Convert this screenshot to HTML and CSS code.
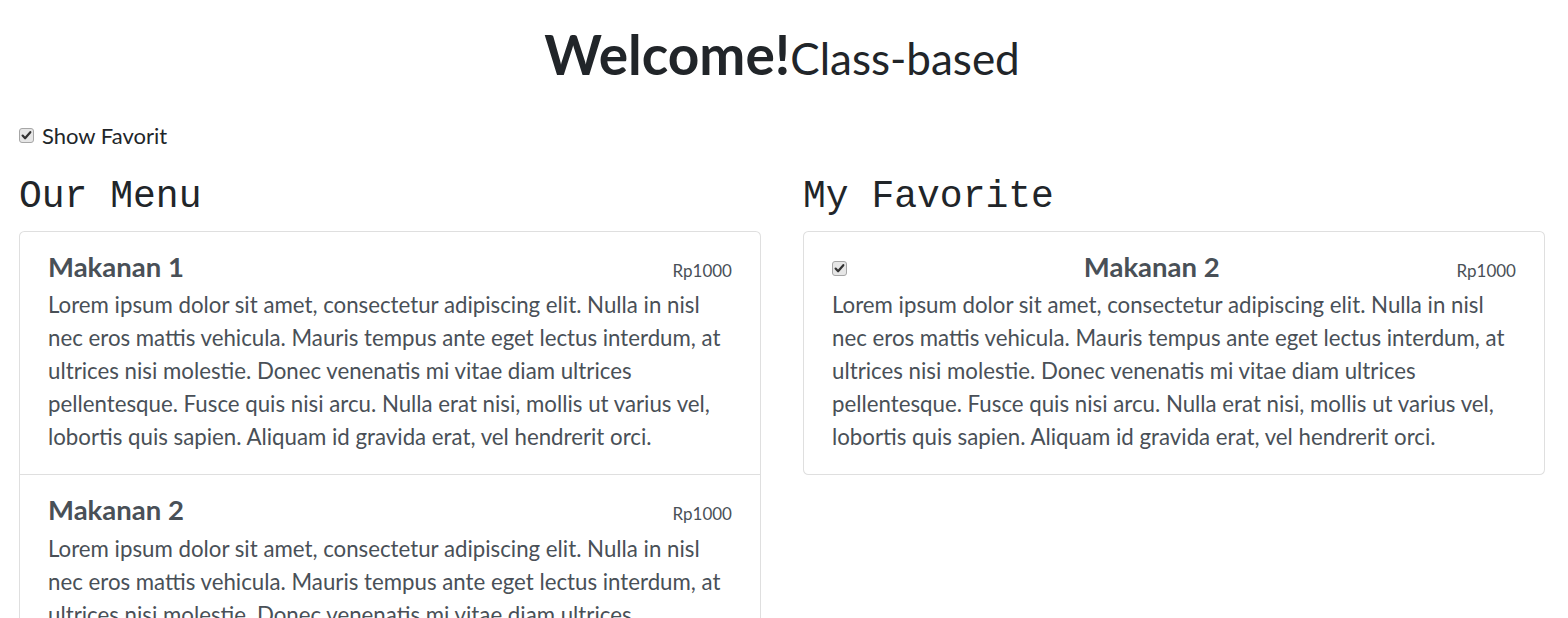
FILE: index.html
```html
<!DOCTYPE html>
<html>
<head>
<meta charset="utf-8">
<title>Welcome! Class-based</title>
<link rel="stylesheet" href="styles.css">
</head>
<body>
<div class="page">
  <h1 class="title">Welcome!<span class="subtitle">Class-based</span></h1>

  <label class="toggle">
    <input type="checkbox" class="check" checked>
    <span>Show Favorit</span>
  </label>

  <div class="columns">
    <section class="column">
      <h2 class="section-title">Our Menu</h2>
      <ul class="card">
        <li class="item">
          <div class="item-head">
            <h5 class="item-name">Makanan 1</h5>
            <span class="price">Rp1000</span>
          </div>
          <p class="item-desc">Lorem ipsum dolor sit amet, consectetur adipiscing elit. Nulla in nisl nec eros mattis vehicula. Mauris tempus ante eget lectus interdum, at ultrices nisi molestie. Donec venenatis mi vitae diam ultrices pellentesque. Fusce quis nisi arcu. Nulla erat nisi, mollis ut varius vel, lobortis quis sapien. Aliquam id gravida erat, vel hendrerit orci.</p>
        </li>
        <li class="item">
          <div class="item-head">
            <h5 class="item-name">Makanan 2</h5>
            <span class="price">Rp1000</span>
          </div>
          <p class="item-desc">Lorem ipsum dolor sit amet, consectetur adipiscing elit. Nulla in nisl nec eros mattis vehicula. Mauris tempus ante eget lectus interdum, at ultrices nisi molestie. Donec venenatis mi vitae diam ultrices pellentesque. Fusce quis nisi arcu. Nulla erat nisi, mollis ut varius vel, lobortis quis sapien. Aliquam id gravida erat, vel hendrerit orci.</p>
        </li>
      </ul>
    </section>

    <section class="column">
      <h2 class="section-title">My Favorite</h2>
      <ul class="card">
        <li class="item">
          <div class="item-head fav-head">
            <input type="checkbox" class="check fav-check" checked>
            <h5 class="item-name">Makanan 2</h5>
            <span class="price">Rp1000</span>
          </div>
          <p class="item-desc">Lorem ipsum dolor sit amet, consectetur adipiscing elit. Nulla in nisl nec eros mattis vehicula. Mauris tempus ante eget lectus interdum, at ultrices nisi molestie. Donec venenatis mi vitae diam ultrices pellentesque. Fusce quis nisi arcu. Nulla erat nisi, mollis ut varius vel, lobortis quis sapien. Aliquam id gravida erat, vel hendrerit orci.</p>
        </li>
      </ul>
    </section>
  </div>
</div>
</body>
</html>
```
FILE: styles.css
```css
* { box-sizing: border-box; }

html, body {
  margin: 0;
  background: #ffffff;
}

body {
  font-family: "Lato", "Liberation Sans", sans-serif;
  color: #212529;
}

.page {
  padding: 21px 23px 40px 19px;
}

.title {
  margin: 0;
  text-align: center;
  font-size: 55px;
  font-weight: 700;
  line-height: 66px;
  color: #212529;
}

.subtitle {
  font-size: 44px;
  font-weight: 400;
}

.toggle {
  display: flex;
  align-items: center;
  gap: 8px;
  margin-top: 28px;
  font-size: 22px;
  line-height: 33px;
  color: #212529;
}

.check {
  -webkit-appearance: none;
  appearance: none;
  flex: none;
  width: 15px;
  height: 15px;
  margin: 0;
  border: 1px solid #a6a6a6;
  border-radius: 3px;
  background-color: #e6e6e6;
  background-image: url("data:image/svg+xml,%3Csvg xmlns='http://www.w3.org/2000/svg' viewBox='0 0 13 13'%3E%3Cpath d='M2.6 6.6 L5.1 9.3 L10.3 3.2' fill='none' stroke='%23333' stroke-width='2.2' stroke-linecap='round' stroke-linejoin='round'/%3E%3C/svg%3E");
  background-repeat: no-repeat;
  background-position: center;
  background-size: 13px 13px;
}

.columns {
  display: grid;
  grid-template-columns: 1fr 1fr;
  column-gap: 42px;
  margin-top: 22px;
  align-items: start;
}

.section-title {
  margin: 0 0 11px 0;
  font-family: "Liberation Mono", "Courier New", monospace;
  font-size: 38px;
  font-weight: 400;
  line-height: 45.6px;
  color: #212529;
}

.card {
  list-style: none;
  margin: 0;
  padding: 0;
  border: 1px solid rgba(0, 0, 0, 0.125);
  border-radius: 5.5px;
  background: #fff;
}

.item {
  padding: 18px 28px 21px;
  color: #495057;
}

.item + .item {
  border-top: 1px solid rgba(0, 0, 0, 0.125);
}

.item-head {
  display: flex;
  justify-content: space-between;
  align-items: baseline;
  margin-bottom: 4.5px;
}

.fav-check {
  align-self: center;
  margin-top: 3px;
}

.item-name {
  margin: 0;
  font-size: 27.5px;
  font-weight: 700;
  line-height: 33px;
  color: #495057;
}

.price {
  font-size: 17px;
  line-height: 26px;
  color: #495057;
}

.item-desc {
  margin: 0;
  font-size: 22.25px;
  line-height: 33px;
  color: #495057;
}
```
